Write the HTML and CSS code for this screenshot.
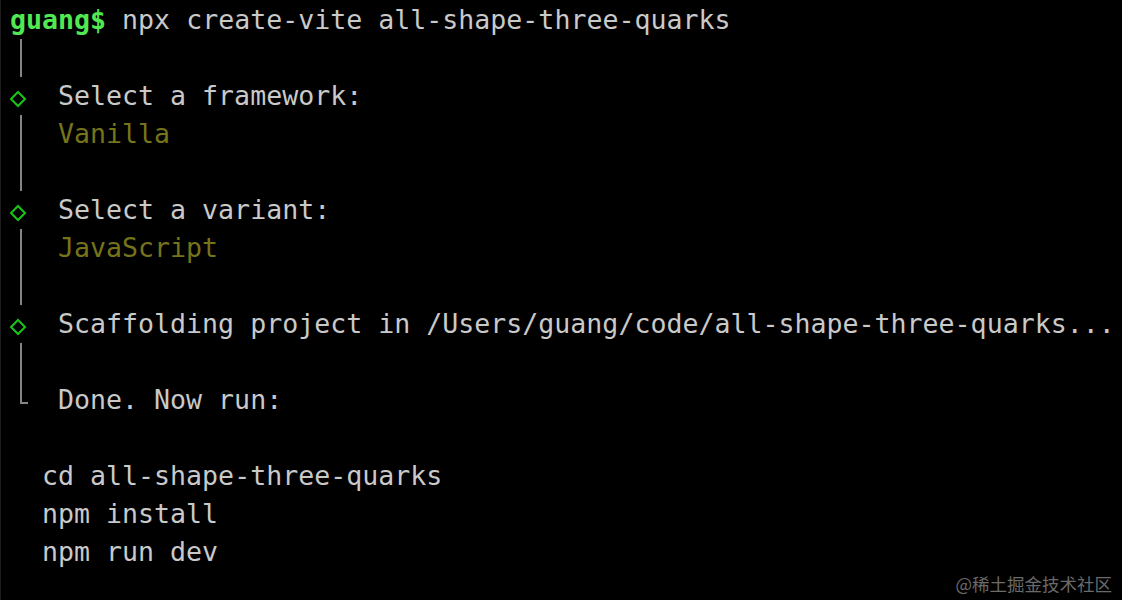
FILE: index.html
```html
<!DOCTYPE html>
<html>
<head>
<meta charset="utf-8">
<link rel="stylesheet" href="styles.css">
</head>
<body>
<div class="term">
  <div class="line"><span class="prompt">guang$</span><span class="txt"> npx create-vite all-shape-three-quarks</span></div>
  <div class="line"><span class="g bar"></span></div>
  <div class="line"><span class="g"><svg class="dia" width="18" height="18" viewBox="0 0 18 18"><polygon points="9,2 16,9 9,16 2,9" fill="none" stroke="#1ac51a" stroke-width="2"/></svg></span><span class="sp"></span><span class="txt">Select a framework:</span></div>
  <div class="line"><span class="g bar"></span><span class="sp"></span><span class="y">Vanilla</span></div>
  <div class="line"><span class="g bar"></span></div>
  <div class="line"><span class="g"><svg class="dia" width="18" height="18" viewBox="0 0 18 18"><polygon points="9,2 16,9 9,16 2,9" fill="none" stroke="#1ac51a" stroke-width="2"/></svg></span><span class="sp"></span><span class="txt">Select a variant:</span></div>
  <div class="line"><span class="g bar"></span><span class="sp"></span><span class="y">JavaScript</span></div>
  <div class="line"><span class="g bar"></span></div>
  <div class="line"><span class="g"><svg class="dia" width="18" height="18" viewBox="0 0 18 18"><polygon points="9,2 16,9 9,16 2,9" fill="none" stroke="#1ac51a" stroke-width="2"/></svg></span><span class="sp"></span><span class="txt">Scaffolding project in /Users/guang/code/all-shape-three-quarks...</span></div>
  <div class="line"><span class="g bar"></span></div>
  <div class="line"><span class="g corner"></span><span class="sp"></span><span class="txt">Done. Now run:</span></div>
  <div class="line"></div>
  <div class="line"><span class="ind"></span><span class="txt">cd all-shape-three-quarks</span></div>
  <div class="line"><span class="ind"></span><span class="txt">npm install</span></div>
  <div class="line"><span class="ind"></span><span class="txt">npm run dev</span></div>
</div>
<div class="mark">@稀土掘金技术社区</div>
</body>
</html>
```
FILE: styles.css
```css
html, body {
  margin: 0;
  padding: 0;
  background: #000;
  width: 1122px;
  height: 600px;
  overflow: hidden;
}
body {
  border-left: 1px solid #1c1c1c;
  box-sizing: border-box;
  position: relative;
}
.term {
  padding: 1px 0 0 9px;
  font-family: "DejaVu Sans Mono", monospace;
  font-size: 26.6px;
  color: #c9c9c9;
}
.line {
  height: 38px;
  line-height: 38px;
  display: flex;
  align-items: stretch;
  white-space: pre;
}
.prompt {
  color: #52e852;
  font-weight: bold;
}
.g {
  width: 16px;
  flex: 0 0 16px;
  position: relative;
  display: flex;
  align-items: center;
  justify-content: center;
}
.bar::before {
  content: "";
  position: absolute;
  left: 10px;
  top: 0;
  bottom: 0;
  width: 2px;
  background: #858585;
}
.corner::before {
  content: "";
  position: absolute;
  left: 10px;
  top: 0;
  height: 23px;
  width: 8px;
  border-left: 2px solid #858585;
  border-bottom: 2px solid #858585;
  box-sizing: border-box;
}
.dia {
  display: block;
  flex: 0 0 18px;
  margin-top: 5px;
}
.sp {
  width: 32px;
  flex: 0 0 32px;
}
.ind {
  width: 32px;
  flex: 0 0 32px;
}
.y {
  color: #76741a;
}
.mark {
  position: absolute;
  right: 10px;
  bottom: 4px;
  font-family: "Noto Sans CJK SC", sans-serif;
  font-size: 17.5px;
  color: #6a6a6a;
}
```
